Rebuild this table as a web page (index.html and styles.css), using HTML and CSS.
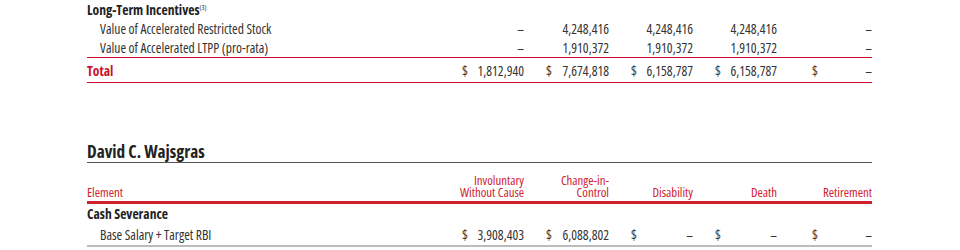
FILE: index.html
```html
<!DOCTYPE html>
<html>
<head>
<meta charset="utf-8">
<link rel="stylesheet" href="styles.css">
</head>
<body>
<div class="page">
  <div class="row section"><div class="label">Long-Term Incentives<sup>(3)</sup></div></div>
  <div class="row item">
    <div class="label indent">Value of Accelerated Restricted Stock</div>
    <div class="val"><span>–</span></div>
    <div class="val"><span>4,248,416</span></div>
    <div class="val"><span>4,248,416</span></div>
    <div class="val"><span>4,248,416</span></div>
    <div class="val last"><span>–</span></div>
  </div>
  <div class="row item">
    <div class="label indent">Value of Accelerated LTPP (pro-rata)</div>
    <div class="val"><span>–</span></div>
    <div class="val"><span>1,910,372</span></div>
    <div class="val"><span>1,910,372</span></div>
    <div class="val"><span>1,910,372</span></div>
    <div class="val last"><span>–</span></div>
  </div>
  <div class="row total">
    <div class="label">Total</div>
    <div class="val cur"><span>$</span><span>1,812,940</span></div>
    <div class="val cur"><span>$</span><span>7,674,818</span></div>
    <div class="val cur"><span>$</span><span>6,158,787</span></div>
    <div class="val cur"><span>$</span><span>6,158,787</span></div>
    <div class="val cur last"><span>$</span><span>–</span></div>
  </div>

  <h2 class="name">David C. Wajsgras</h2>
  <div class="row head">
    <div class="label">Element</div>
    <div class="hd">Involuntary<br>Without Cause</div>
    <div class="hd">Change-in-<br>Control</div>
    <div class="hd">Disability</div>
    <div class="hd">Death</div>
    <div class="hd">Retirement</div>
  </div>
  <div class="row section"><div class="label">Cash Severance</div></div>
  <div class="row item last-item">
    <div class="label indent">Base Salary + Target RBI</div>
    <div class="val cur"><span>$</span><span>3,908,403</span></div>
    <div class="val cur"><span>$</span><span>6,088,802</span></div>
    <div class="val cur"><span>$</span><span>–</span></div>
    <div class="val cur"><span>$</span><span>–</span></div>
    <div class="val cur last"><span>$</span><span>–</span></div>
  </div>
</div>
</body>
</html>
```
FILE: styles.css
```css
html, body {
  margin: 0;
  padding: 0;
  background: #fff;
}
body {
  font-family: "Open Sans", "DejaVu Sans Condensed", sans-serif;
  font-stretch: 75%;
  font-size: 13.6px;
  color: #333;
}
.page {
  width: 785px;
  margin-left: 87px;
}
.row {
  display: grid;
  grid-template-columns: 1fr 84px 85px 84px 84px 95px;
  align-items: center;
}
.label {
  white-space: nowrap;
}
.section {
  height: 19px;
  font-weight: bold;
  color: #222;
}
.section sup {
  font-size: 7px;
  font-weight: normal;
  vertical-align: 5px;
  line-height: 0;
}
.item {
  height: 19px;
}
.indent {
  padding-left: 13px;
}
.val {
  display: flex;
  justify-content: flex-end;
  padding-left: 22px;
}
.val.last {
  padding-left: 35px;
}
.val.cur {
  justify-content: space-between;
}
.total {
  height: 24px;
  border-top: 1px solid #c8102e;
  border-bottom: 1px solid #c8102e;
}
.total .label {
  color: #c8102e;
  font-weight: bold;
}
.name {
  margin: 58px 0 0;
  font-size: 17.3px;
  font-weight: bold;
  color: #222;
  height: 21px;
  line-height: 21px;
  border-bottom: 1px solid #555;
}
.head {
  align-items: end;
  padding-bottom: 3px;
  border-bottom: 3px solid #d0202f;
  color: #d0202f;
  font-size: 12.8px;
  line-height: 12px;
  box-sizing: border-box;
  height: 41px;
}
.hd {
  text-align: right;
}
.last-item {
  border-bottom: 2px solid #bbb;
  height: 22px;
}
```
